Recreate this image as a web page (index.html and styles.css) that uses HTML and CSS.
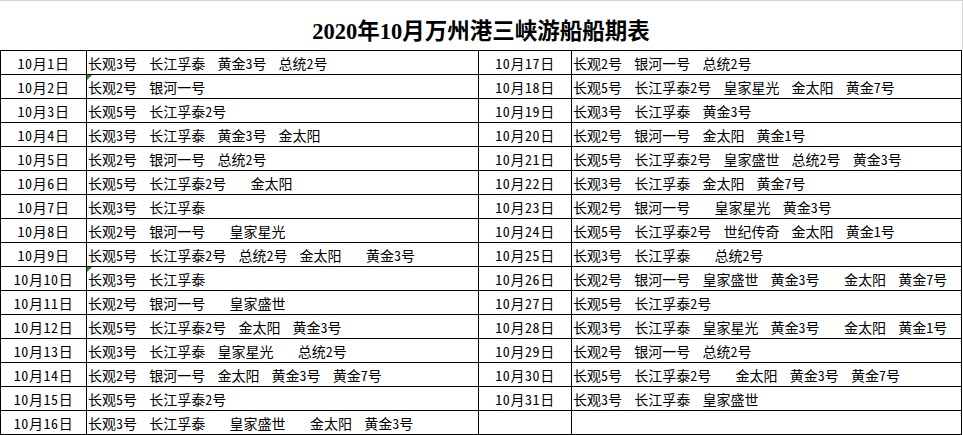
FILE: index.html
```html
<!DOCTYPE html>
<html lang="zh-CN">
<head>
<meta charset="utf-8">
<title>2020年10月万州港三峡游船船期表</title>
<link rel="stylesheet" href="styles.css">
</head>
<body>
<div class="sheet">
  <div class="title">2020年10月万州港三峡游船船期表</div>
  <div class="grid">
    <div class="c date">10月1日</div><div class="c ships">长观3号  长江孚泰  黄金3号  总统2号</div><div class="c date">10月17日</div><div class="c ships">长观2号  银河一号  总统2号</div>
    <div class="c date">10月2日</div><div class="c ships"><span class="flag"></span>长观2号  银河一号</div><div class="c date">10月18日</div><div class="c ships">长观5号  长江孚泰2号  皇家星光  金太阳  黄金7号</div>
    <div class="c date">10月3日</div><div class="c ships">长观5号  长江孚泰2号</div><div class="c date">10月19日</div><div class="c ships">长观3号  长江孚泰  黄金3号</div>
    <div class="c date">10月4日</div><div class="c ships">长观3号  长江孚泰  黄金3号  金太阳</div><div class="c date">10月20日</div><div class="c ships">长观2号  银河一号  金太阳  黄金1号</div>
    <div class="c date">10月5日</div><div class="c ships">长观2号  银河一号  总统2号</div><div class="c date">10月21日</div><div class="c ships">长观5号  长江孚泰2号  皇家盛世  总统2号  黄金3号</div>
    <div class="c date">10月6日</div><div class="c ships">长观5号  长江孚泰2号    金太阳</div><div class="c date">10月22日</div><div class="c ships">长观3号  长江孚泰  金太阳  黄金7号</div>
    <div class="c date">10月7日</div><div class="c ships">长观3号  长江孚泰</div><div class="c date">10月23日</div><div class="c ships">长观2号  银河一号    皇家星光  黄金3号</div>
    <div class="c date">10月8日</div><div class="c ships">长观2号  银河一号    皇家星光</div><div class="c date">10月24日</div><div class="c ships">长观5号  长江孚泰2号  世纪传奇  金太阳  黄金1号</div>
    <div class="c date">10月9日</div><div class="c ships">长观5号  长江孚泰2号  总统2号  金太阳    黄金3号</div><div class="c date">10月25日</div><div class="c ships">长观3号  长江孚泰    总统2号</div>
    <div class="c date">10月10日</div><div class="c ships"><span class="flag"></span>长观3号  长江孚泰</div><div class="c date">10月26日</div><div class="c ships">长观2号  银河一号  皇家盛世  黄金3号    金太阳  黄金7号</div>
    <div class="c date">10月11日</div><div class="c ships">长观2号  银河一号    皇家盛世</div><div class="c date">10月27日</div><div class="c ships">长观5号  长江孚泰2号</div>
    <div class="c date">10月12日</div><div class="c ships">长观5号  长江孚泰2号  金太阳  黄金3号</div><div class="c date">10月28日</div><div class="c ships">长观3号  长江孚泰  皇家星光  黄金3号    金太阳  黄金1号</div>
    <div class="c date">10月13日</div><div class="c ships">长观3号  长江孚泰  皇家星光    总统2号</div><div class="c date">10月29日</div><div class="c ships">长观2号  银河一号  总统2号</div>
    <div class="c date">10月14日</div><div class="c ships">长观2号  银河一号  金太阳  黄金3号  黄金7号</div><div class="c date">10月30日</div><div class="c ships">长观5号  长江孚泰2号    金太阳  黄金3号  黄金7号</div>
    <div class="c date">10月15日</div><div class="c ships">长观5号  长江孚泰2号</div><div class="c date">10月31日</div><div class="c ships">长观3号  长江孚泰  皇家盛世</div>
    <div class="c date">10月16日</div><div class="c ships">长观3号  长江孚泰    皇家盛世    金太阳  黄金3号</div><div class="c date"></div><div class="c ships"></div>
  </div>
</div>
</body>
</html>
```
FILE: styles.css
```css
* { box-sizing: border-box; }
html, body { margin: 0; padding: 0; background: #fff; }
.sheet { width: 963px; }
.title {
  height: 50px;
  border-top: 1px solid #d4d4d4;
  border-right: 1px solid #d4d4d4;
  display: flex;
  align-items: center;
  justify-content: center;
  padding-top: 6px;
  font-family: "Liberation Serif", "Noto Sans CJK SC", serif;
  font-weight: bold;
  font-size: 22.5px;
  color: #000;
}
.grid {
  width: 962px;
  display: grid;
  grid-template-columns: 86px 392px 93px 390px;
  grid-auto-rows: 24px;
  border-left: 1px solid #000;
  border-top: 1px solid #000;
}
.c {
  position: relative;
  border-right: 1px solid #000;
  border-bottom: 1px solid #000;
  font-family: "Noto Sans Mono CJK SC", "Noto Sans CJK SC", sans-serif;
  font-size: 14px;
  line-height: 23px;
  padding-top: 1px;
  white-space: pre;
  overflow: hidden;
  color: #000;
}
.date { text-align: center; letter-spacing: 0.6px; }
.ships { padding-left: 1px; word-spacing: -0.9px; }
.flag {
  position: absolute;
  left: 0;
  top: 0;
  width: 0;
  height: 0;
  border-top: 5px solid #1f8a1f;
  border-right: 5px solid transparent;
}
```
